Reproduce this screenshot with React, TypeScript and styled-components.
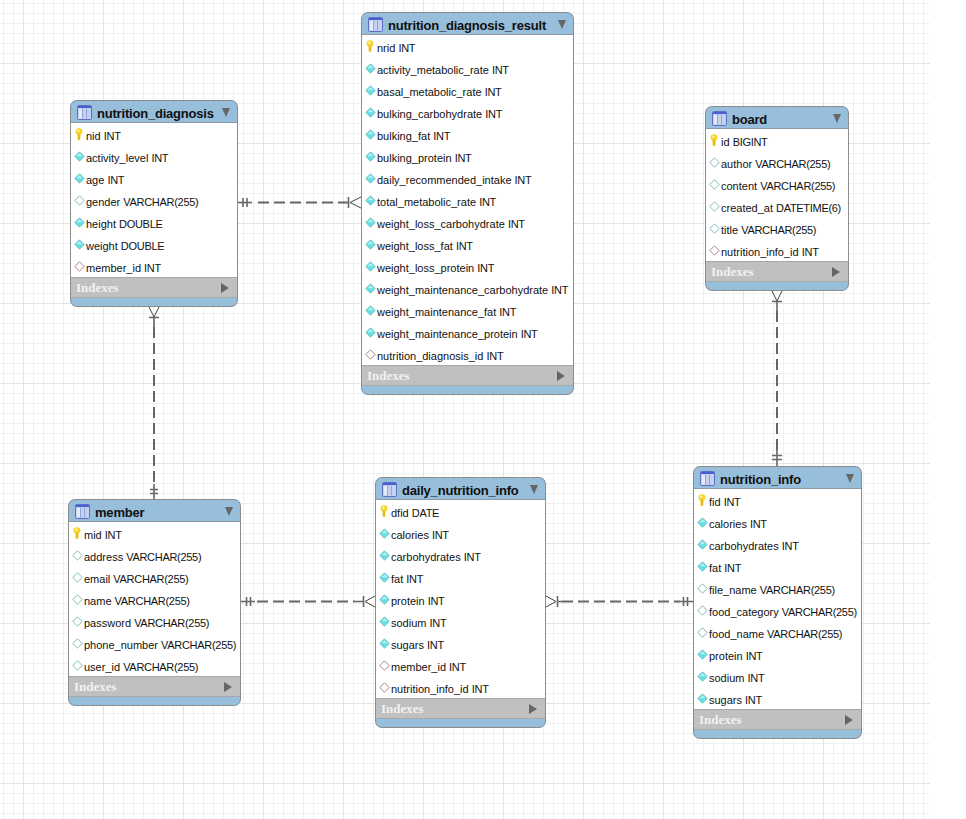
import styled, { createGlobalStyle } from "styled-components";

type ColumnKind = "key" | "fill" | "open" | "fk";

interface IColumn {
  name: string;
  kind: ColumnKind;
}

interface ITable {
  name: string;
  x: number;
  y: number;
  width: number;
  columns: IColumn[];
}

const col = (kind: ColumnKind, names: string[]): IColumn[] =>
  names.map((name) => ({ name, kind }));

const tables: ITable[] = [
  {
    name: "nutrition_diagnosis",
    x: 70,
    y: 100,
    width: 168,
    columns: [
      ...col("key", ["nid INT"]),
      ...col("fill", ["activity_level INT", "age INT"]),
      ...col("open", ["gender VARCHAR(255)"]),
      ...col("fill", ["height DOUBLE", "weight DOUBLE"]),
      ...col("fk", ["member_id INT"]),
    ],
  },
  {
    name: "nutrition_diagnosis_result",
    x: 361,
    y: 12,
    width: 213,
    columns: [
      ...col("key", ["nrid INT"]),
      ...col("fill", [
        "activity_metabolic_rate INT",
        "basal_metabolic_rate INT",
        "bulking_carbohydrate INT",
        "bulking_fat INT",
        "bulking_protein INT",
        "daily_recommended_intake INT",
        "total_metabolic_rate INT",
        "weight_loss_carbohydrate INT",
        "weight_loss_fat INT",
        "weight_loss_protein INT",
        "weight_maintenance_carbohydrate INT",
        "weight_maintenance_fat INT",
        "weight_maintenance_protein INT",
      ]),
      ...col("fk", ["nutrition_diagnosis_id INT"]),
    ],
  },
  {
    name: "board",
    x: 705,
    y: 106,
    width: 144,
    columns: [
      ...col("key", ["id BIGINT"]),
      ...col("open", [
        "author VARCHAR(255)",
        "content VARCHAR(255)",
        "created_at DATETIME(6)",
        "title VARCHAR(255)",
      ]),
      ...col("fk", ["nutrition_info_id INT"]),
    ],
  },
  {
    name: "member",
    x: 68,
    y: 499,
    width: 173,
    columns: [
      ...col("key", ["mid INT"]),
      ...col("open", [
        "address VARCHAR(255)",
        "email VARCHAR(255)",
        "name VARCHAR(255)",
        "password VARCHAR(255)",
        "phone_number VARCHAR(255)",
        "user_id VARCHAR(255)",
      ]),
    ],
  },
  {
    name: "daily_nutrition_info",
    x: 375,
    y: 477,
    width: 171,
    columns: [
      ...col("key", ["dfid DATE"]),
      ...col("fill", [
        "calories INT",
        "carbohydrates INT",
        "fat INT",
        "protein INT",
        "sodium INT",
        "sugars INT",
      ]),
      ...col("fk", ["member_id INT", "nutrition_info_id INT"]),
    ],
  },
  {
    name: "nutrition_info",
    x: 693,
    y: 466,
    width: 169,
    columns: [
      ...col("key", ["fid INT"]),
      ...col("fill", ["calories INT", "carbohydrates INT", "fat INT"]),
      ...col("open", [
        "file_name VARCHAR(255)",
        "food_category VARCHAR(255)",
        "food_name VARCHAR(255)",
      ]),
      ...col("fill", ["protein INT", "sodium INT", "sugars INT"]),
    ],
  },
];

const TableIcon = () => (
  <svg width="15" height="15" viewBox="0 0 15 15">
    <rect x="0.5" y="0.5" width="14" height="14" rx="1" fill="#c4d2f0" stroke="#5d6fc4" />
    <rect x="1" y="1" width="13" height="2" fill="#4a5fd4" />
    <rect x="2" y="4" width="3" height="9" fill="#e4ebfb" />
    <path d="M5.5 3.5v10M9.5 3.5v10" stroke="#93a5dc" strokeWidth="1" />
  </svg>
);

const KeyIcon = () => (
  <svg width="8" height="13" viewBox="0 0 8 13">
    <ellipse cx="4" cy="3.6" rx="3.4" ry="3.3" fill="#f5d327" />
    <path d="M2.6 6h2.8v4.6L4 12.4 2.6 11z" fill="#e8bd12" />
    <ellipse cx="3.4" cy="2.8" rx="1.4" ry="1.3" fill="#fff2a0" />
  </svg>
);

const DiamondIcon = ({ kind }: { kind: ColumnKind }) => {
  const stroke = kind === "fk" ? "#b08080" : kind === "open" ? "#7fb8b8" : "#78c4c6";
  const fill = kind === "fill" ? "#66dfe4" : "#ffffff";
  return (
    <svg width="11" height="11" viewBox="0 0 11 11">
      <path d="M5.5 .8 10.2 5.5 5.5 10.2 .8 5.5z" fill={fill} stroke={stroke} />
      {kind === "fill" && <path d="M5.5 2.2 2.6 5.2H8.4z" fill="#b4f3f4" />}
    </svg>
  );
};

const EntityTable = ({ table }: { table: ITable }) => (
  <TableStyled $x={table.x} $y={table.y} $width={table.width}>
    <TableHeader>
      <TableIcon />
      <TableTitle>{table.name}</TableTitle>
      <ArrowDown />
    </TableHeader>
    <ColumnList>
      {table.columns.map((column) => {
        const [name, type] = column.name.split(" ");
        return (
          <ColumnRow key={column.name}>
            <ColumnIconSlot>
              {column.kind === "key" ? <KeyIcon /> : <DiamondIcon kind={column.kind} />}
            </ColumnIconSlot>
            {name}&nbsp;<ColumnType>{type}</ColumnType>
          </ColumnRow>
        );
      })}
    </ColumnList>
    <IndexesBar>
      Indexes
      <ArrowRight />
    </IndexesBar>
    <TableFooter />
  </TableStyled>
);

const Relations = () => (
  <RelationsSvg width="966" height="819" viewBox="0 0 966 819">
    <g fill="none" stroke="#666666">
      {/* nutrition_diagnosis - nutrition_diagnosis_result */}
      <path d="M238 202.5h14M243 198v9M247 198v9M348.5 197v11" strokeWidth="1.6" />
      <path d="M258 202.5H348" strokeWidth="2" strokeDasharray="11 5" />
      <path d="M361 197l-11 5.5 11 5.5" stroke="#444" strokeWidth="1" />

      {/* member - daily_nutrition_info */}
      <path d="M241 601.5h14M246.5 597v9M250.5 597v9M363.5 596v11M355 601.5h9" strokeWidth="1.6" />
      <path d="M257 601.5H355" strokeWidth="2" strokeDasharray="11 5" />
      <path d="M375 596l-10 5.5 10 5.5" stroke="#444" strokeWidth="1" />

      {/* daily_nutrition_info - nutrition_info */}
      <path d="M557 601.5h5M557.5 596v11M683.5 597v9M687.5 597v9M680 601.5h13" strokeWidth="1.6" />
      <path d="M562 601.5H680" strokeWidth="2" strokeDasharray="11 5" />
      <path d="M546 596l10 5.5-10 5.5" stroke="#444" strokeWidth="1" />

      {/* nutrition_diagnosis - member */}
      <path d="M149 317.5h10M150 489.5h8M150 493.5h8M154 317v10M154 484v15" strokeWidth="1.6" />
      <path d="M154 327V484" strokeWidth="2" strokeDasharray="11 5" />
      <path d="M149 307l5 10 5-10" stroke="#444" strokeWidth="1" />

      {/* board - nutrition_info */}
      <path d="M772 301.5h10M772 455.5h10M772 459.5h10M777 301v10M777 450v16" strokeWidth="1.6" />
      <path d="M777 311V450" strokeWidth="2" strokeDasharray="11 5" />
      <path d="M772 291l5 10 5-10" stroke="#444" strokeWidth="1" />
    </g>
  </RelationsSvg>
);

const App = () => (
  <>
    <GlobalStyle />
    <Canvas>
      <Relations />
      {tables.map((table) => (
        <EntityTable key={table.name} table={table} />
      ))}
    </Canvas>
  </>
);

export default App;

const GlobalStyle = createGlobalStyle`
  html, body {
    margin: 0;
    padding: 0;
    background: #ffffff;
  }
`;

const Canvas = styled.div`
  position: relative;
  width: 966px;
  height: 819px;
  overflow: hidden;
  font-family: "Liberation Sans", Arial, sans-serif;

  &::before {
    content: "";
    position: absolute;
    left: 0;
    top: 0;
    width: 930px;
    height: 819px;
    background-color: #ffffff;
    background-image:
      linear-gradient(to right, #e4e4e4 1px, transparent 1px),
      linear-gradient(to bottom, #e4e4e4 1px, transparent 1px),
      linear-gradient(to right, #f0f0f0 1px, transparent 1px),
      linear-gradient(to bottom, #f0f0f0 1px, transparent 1px);
    background-size: 80px 80px, 80px 80px, 10px 10px, 10px 10px;
    background-position: 23px 0, 0 63px, 3px 0, 0 3px;
  }
`;

const RelationsSvg = styled.svg`
  position: absolute;
  left: 0;
  top: 0;
`;

const TableStyled = styled.div<{ $x: number; $y: number; $width: number }>`
  position: absolute;
  left: ${(props) => props.$x}px;
  top: ${(props) => props.$y}px;
  width: ${(props) => props.$width}px;
  box-sizing: border-box;
  display: flex;
  flex-direction: column;
  border-radius: 7px;
  overflow: hidden;
  background: #ffffff;

  /* outline goes over the coloured header and footer */
  &::after {
    content: "";
    position: absolute;
    inset: 0;
    border: 1px solid #8c8c8c;
    border-radius: 7px;
    pointer-events: none;
  }
`;

const TableHeader = styled.div`
  height: 23px;
  box-sizing: border-box;
  display: flex;
  align-items: center;
  padding: 2px 8px 0 7px;
  background: #97bedb;
  border-bottom: 1px solid #8c9aa6;
`;

const TableTitle = styled.span`
  flex: 1;
  margin-left: 5px;
  padding-top: 2px;
  font-size: 13px;
  font-weight: 700;
  letter-spacing: -0.2px;
  color: #101010;
  white-space: nowrap;
`;

const ArrowDown = styled.span`
  width: 0;
  height: 0;
  margin-top: 1px;
  border-left: 4.5px solid transparent;
  border-right: 4.5px solid transparent;
  border-top: 9px solid #666666;
`;

const ColumnList = styled.div`
  display: flex;
  flex-direction: column;
`;

const ColumnRow = styled.div`
  height: 22px;
  display: flex;
  align-items: center;
  padding: 3px 0 0 1px;
  box-sizing: border-box;
  font-size: 11px;
  color: #111111;
  white-space: nowrap;
`;

const ColumnType = styled.span`
  letter-spacing: -0.3px;
`;

const ColumnIconSlot = styled.span`
  width: 15px;
  display: flex;
  justify-content: center;
  padding-left: 1px;
  box-sizing: border-box;
  margin-top: -3px;
`;

const IndexesBar = styled.div`
  height: 21px;
  box-sizing: border-box;
  display: flex;
  align-items: center;
  justify-content: space-between;
  padding: 0 9px 0 6px;
  background: #c0c0c0;
  border-top: 1px solid #a8a8a8;
  border-bottom: 1px solid #a8a8a8;
  font-family: "Liberation Serif", serif;
  font-size: 13px;
  font-weight: 700;
  color: #f2f2f2;
`;

const ArrowRight = styled.span`
  width: 0;
  height: 0;
  border-top: 5px solid transparent;
  border-bottom: 5px solid transparent;
  border-left: 8px solid #666666;
`;

const TableFooter = styled.div`
  height: 9px;
  background: #97bedb;
`;
